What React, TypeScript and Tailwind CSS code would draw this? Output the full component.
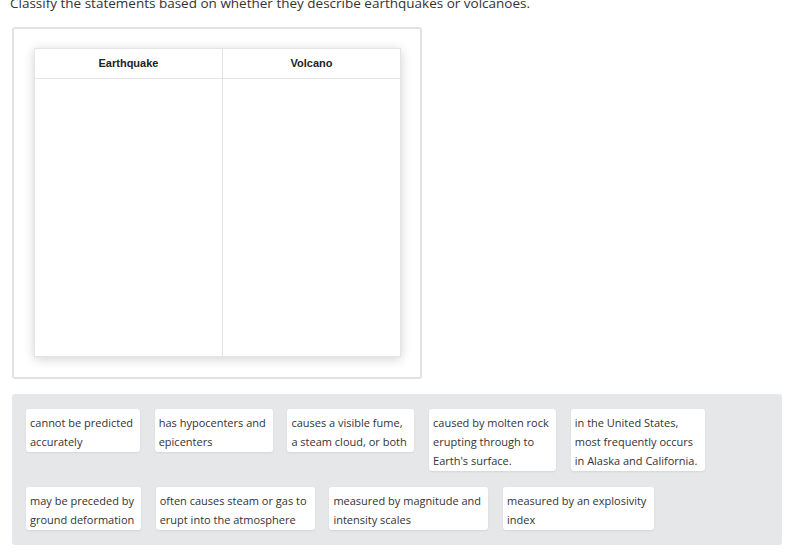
import React from "react";

type Tile = { lines: string[]; width: number };

const rowOne: Tile[] = [
  { lines: ["cannot be predicted", "accurately"], width: 114 },
  { lines: ["has hypocenters and", "epicenters"], width: 118 },
  { lines: ["causes a visible fume,", "a steam cloud, or both"], width: 127 },
  {
    lines: ["caused by molten rock", "erupting through to", "Earth's surface."],
    width: 127,
  },
  {
    lines: [
      "in the United States,",
      "most frequently occurs",
      "in Alaska and California.",
    ],
    width: 134,
  },
];

const rowTwo: Tile[] = [
  { lines: ["may be preceded by", "ground deformation"], width: 115 },
  {
    lines: ["often causes steam or gas to", "erupt into the atmosphere"],
    width: 159,
  },
  { lines: ["measured by magnitude and", "intensity scales"], width: 159 },
  { lines: ["measured by an explosivity", "index"], width: 151 },
];

const TileCard: React.FC<{ tile: Tile }> = ({ tile }) => (
  <div
    className="bg-white rounded-[3px] px-[4px] pt-[4px] pb-[1px] shadow-[0_1px_2px_rgba(0,0,0,0.08)] shrink-0"
    style={{ width: tile.width }}
  >
    {tile.lines.map((line, i) => (
      <div key={i} className="whitespace-nowrap leading-[19px]">
        {line}
      </div>
    ))}
  </div>
);

const App: React.FC = () => {
  return (
    <div
      className="w-[796px] h-[555px] overflow-hidden bg-white text-[#333]"
      style={{ fontFamily: '"Open Sans", sans-serif' }}
    >
      <div className="mt-[-7px] ml-[10px] h-[20px] text-[13.5px] leading-[20px] whitespace-nowrap">
        Classify the statements based on whether they describe earthquakes or
        volcanoes.
      </div>

      {/* Zona de clasificación */}
      <div className="mt-[14px] ml-[12px] w-[410px] h-[352px] border-2 border-[#e2e2e2] rounded-[3px] pt-[19px] pl-[20px]">
        <div className="w-[367px] h-[309px] bg-white border border-[#e4e4e4] shadow-[0_2px_10px_rgba(0,0,0,0.18)] flex">
          <div className="w-[188px] flex flex-col border-r border-[#e2e2e2]">
            <div
              className="h-[30px] flex items-center justify-center text-[11px] font-bold text-[#222] border-b border-[#e6e6e6]"
              style={{ fontFamily: '"Liberation Sans", Arial, sans-serif' }}
            >
              Earthquake
            </div>
            <div className="flex-1" />
          </div>
          <div className="flex-1 flex flex-col">
            <div
              className="h-[30px] flex items-center justify-center text-[11px] font-bold text-[#222] border-b border-[#e6e6e6]"
              style={{ fontFamily: '"Liberation Sans", Arial, sans-serif' }}
            >
              Volcano
            </div>
            <div className="flex-1" />
          </div>
        </div>
      </div>

      {/* Fichas */}
      <div className="mt-[15px] ml-[12px] w-[770px] h-[151px] bg-[#e6e7e8] rounded-[3px] pt-[15px] pl-[14px] text-[11px] text-[#333] flex flex-col gap-[16px]">
        <div className="flex items-start gap-[14.7px]">
          {rowOne.map((tile, i) => (
            <TileCard key={i} tile={tile} />
          ))}
        </div>
        <div className="flex items-start gap-[14.7px]">
          {rowTwo.map((tile, i) => (
            <TileCard key={i} tile={tile} />
          ))}
        </div>
      </div>
    </div>
  );
};

export default App;
